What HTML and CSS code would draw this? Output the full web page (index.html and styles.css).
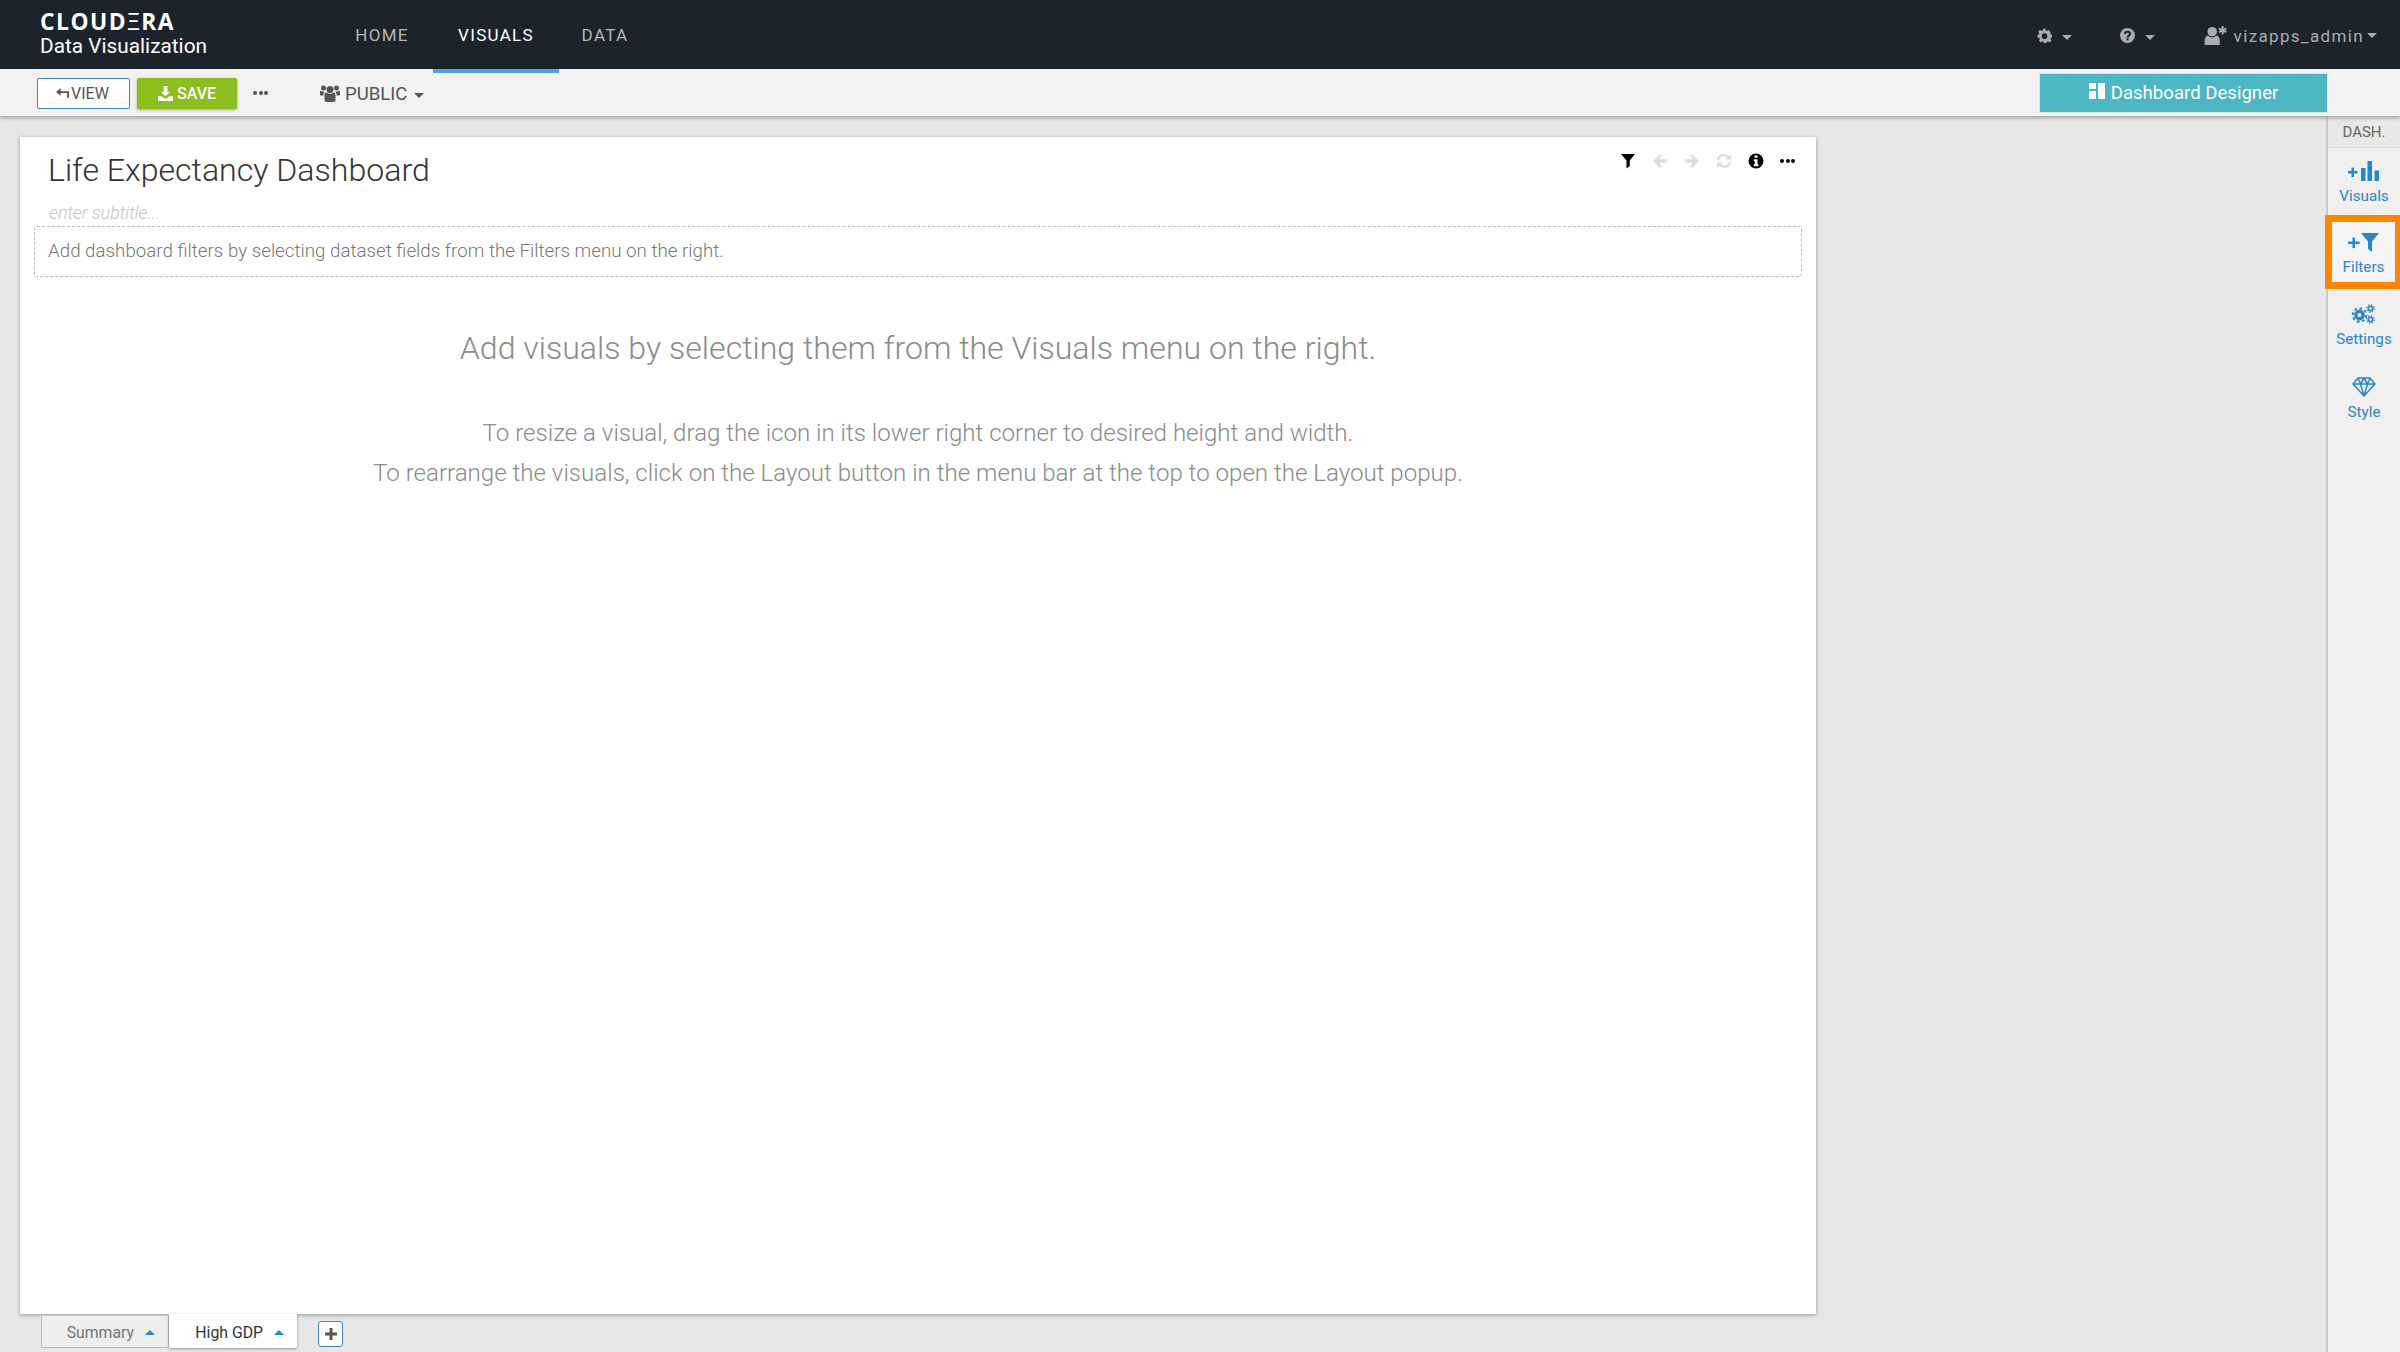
FILE: index.html
```html
<!DOCTYPE html>
<html lang="en">
<head>
<meta charset="utf-8">
<title>Life Expectancy Dashboard</title>
<link rel="stylesheet" href="styles.css">
</head>
<body>
<header class="topbar">
  <div class="brand">
    <div class="brand-name">CLOUD<span class="brand-e">Ξ</span>RA</div>
    <div class="brand-sub">Data Visualization</div>
  </div>
  <nav class="nav">
    <a class="nav-item nav-home">HOME</a>
    <a class="nav-item active">VISUALS</a>
    <a class="nav-item nav-data">DATA</a>
  </nav>
  <div class="top-right">
    <span class="top-menu gear-menu">
      <svg class="ic14" viewBox="0 0 24 24"><path fill="#a9adb1" fill-rule="evenodd" d="M14.200 1h-4.400l-.6 3.100-1.700.7-2.600-1.800-3.100 3.100 1.800 2.600-.7 1.700L.9 11v4.200l3.100.6.7 1.700-1.800 2.600 3.100 3 2.600-1.800 1.700.7.6 2.900h4.400l.6-3 1.700-.7 2.600 1.800 3-3-1.800-2.600.7-1.700 3.100-.6V11l-3.100-.6-.7-1.700L21.200 6l-3-3-2.600 1.800-1.700-.7zM12 8.500a4.500 4.500 0 1 1 0 9 4.500 4.500 0 0 1 0-9z"/></svg>
      <i class="caret caret-grey"></i>
    </span>
    <span class="top-menu help-menu">
      <svg class="ic14" viewBox="0 0 24 24"><circle cx="12" cy="12" r="12" fill="#a9adb1"/><path fill="none" stroke="#1c232b" stroke-width="3.200" d="M8 9.500C8 7 10 6 12 6s4 1.200 4 3.500c0 3-4 3-4 5.500"/><rect x="10.300" y="16.500" width="3.400" height="3.200" fill="#1c232b"/></svg>
      <i class="caret caret-grey"></i>
    </span>
    <span class="top-menu user-menu">
      <svg class="ic-user" viewBox="0 0 24 20"><circle cx="8" cy="6" r="5" fill="#a9adb1"/><path fill="#a9adb1" d="M0 20v-5c0-3 2-5 4-5 1 1.500 2.500 2 4 2s3-.5 4-2c2 0 4 2 4 5v5z"/><path stroke="#a9adb1" stroke-width="2" d="M19 0v9M15 2.500l8 4M23 2.500l-8 4"/></svg>
      <span class="user-name">vizapps_admin</span><i class="caret caret-grey caret-tight"></i>
    </span>
  </div>
</header>

<div class="toolbar">
  <button class="btn btn-view">
    <svg class="ic-reply" viewBox="0 0 14 10"><path fill="#555" d="M5 0v3h9v7h-2V5H5v3L0 4z"/></svg>VIEW
  </button>
  <button class="btn btn-save">
    <svg class="ic-save" viewBox="0 0 16 16"><path fill="#fff" d="M6 0h4v6h3l-5 5-5-5h3zM0 11h4l2 2h4l2-2h4v5H0z"/></svg>SAVE
  </button>
  <span class="dots dots-bar"><i></i><i></i><i></i></span>
  <span class="public">
    <svg class="ic-group" viewBox="0 0 20 17"><circle cx="10" cy="4.500" r="3.500" fill="#555"/><circle cx="3.500" cy="3" r="2.500" fill="#555"/><circle cx="16.500" cy="3" r="2.500" fill="#555"/><path fill="#555" d="M4.500 10c0-1.500 1-2.500 2-2.500 1 .8 2.200 1.200 3.500 1.200s2.500-.4 3.500-1.200c1 0 2 1 2 2.500v5c0 1-1 2-2 2h-7c-1 0-2-1-2-2z"/><path fill="#555" d="M0 7c0-.8.500-1.300 1-1.300.7.600 1.500.9 2.500.9l1 .4C3.800 7.800 3.400 9 3.400 10.500H1c-.5 0-1-.5-1-1zM20 7c0-.8-.5-1.300-1-1.300-.7.600-1.500.9-2.500.9l-1 .4c.7.800 1.100 2 1.100 3.500H19c.5 0 1-.5 1-1z"/></svg>
    PUBLIC<i class="caret caret-dark"></i>
  </span>
  <div class="designer">
    <svg class="ic-layout" viewBox="0 0 16 16"><path fill="#fff" d="M0 0h7v6H0zM0 8h7v8H0zM9 0h7v16H9z"/></svg>Dashboard Designer
  </div>
</div>

<div class="workspace">
  <main class="canvas">
    <section class="card">
      <div class="card-head">
        <h1 class="title">Life Expectancy Dashboard</h1>
        <div class="card-tools">
          <svg class="tool" viewBox="0 0 16 16"><path fill="#000" d="M1 1h14L9.800 7.500V13L6.500 15.500V7.500z"/></svg>
          <svg class="tool" viewBox="0 0 16 16"><path fill="#ddd" d="M8 1l2 2-3.200 3.300H15v3.400H6.800L10 13l-2 2-7-7z"/></svg>
          <svg class="tool" viewBox="0 0 16 16"><path fill="#ddd" d="M8 1L6 3l3.200 3.300H1v3.400h8.200L6 13l2 2 7-7z"/></svg>
          <svg class="tool" viewBox="0 0 16 16"><path fill="none" stroke="#ddd" stroke-width="2.200" d="M2 7c.5-3 3-4.800 6-4.800 2 0 3.500 1 4.500 2.300M14 9c-.5 3-3 4.800-6 4.800-2 0-3.500-1-4.500-2.300"/><path fill="#ddd" d="M15 1v5.500H9.500zM1 15V9.500h5.500z"/></svg>
          <svg class="tool" viewBox="0 0 16 16"><circle cx="8" cy="8" r="7.500" fill="#000"/><path fill="#fff" d="M6.500 2.500h3v2.300h-3zM5.800 6.200h3.700v5h1v2H5.800v-2h1v-3h-1z"/></svg>
          <span class="dots dots-card"><i></i><i></i><i></i></span>
        </div>
      </div>
      <div class="subtitle">enter subtitle...</div>
      <div class="filter-zone">Add dashboard filters by selecting dataset fields from the Filters menu on the right.</div>
      <div class="hint">
        <h2 class="hint-title">Add visuals by selecting them from the Visuals menu on the right.</h2>
        <p class="hint-line">To resize a visual, drag the icon in its lower right corner to desired height and width.</p>
        <p class="hint-line">To rearrange the visuals, click on the Layout button in the menu bar at the top to open the Layout popup.</p>
      </div>
    </section>
    <div class="tabs">
      <div class="tab">Summary<i class="caret-up"></i></div>
      <div class="tab tab-active">High GDP<i class="caret-up"></i></div>
      <button class="tab-add"><svg viewBox="0 0 12 12"><path fill="#555" d="M4.500 0h3v4.500H12v3H7.500V12h-3V7.500H0v-3h4.500z"/></svg></button>
    </div>
  </main>
  <aside class="side">
    <div class="side-head">DASH.</div>
    <div class="side-item">
      <svg class="side-ic" viewBox="0 0 32 20"><path fill="#2b86c8" d="M0 10h3.500V6.500h2.500V10h3.500v2.500H6V16H3.500v-3.500H0zM13 7h4.500v13H13zM19.500 0H24v20h-4.500zM26.500 9.500H31V20h-4.500z"/></svg>
      <span>Visuals</span>
    </div>
    <div class="side-item side-item-hl">
      <svg class="side-ic" viewBox="0 0 32 20"><path fill="#2b86c8" d="M0 9.500h4.500V5.500H7v4h4.500V12H7v4H4.500v-4H0zM13 1h18l-7 8.500V20l-4-3V9.500z"/></svg>
      <span>Filters</span>
    </div>
    <div class="side-item">
      <svg class="side-ic" viewBox="0 0 32 20"><g fill="none" stroke="#2b86c8"><circle cx="11.500" cy="11" r="3.700" stroke-width="3.400"/><circle cx="11.500" cy="11" r="6.800" stroke-width="2" stroke-dasharray="2.800 2.500"/><circle cx="22.500" cy="4.500" r="2.200" stroke-width="1.500"/><circle cx="22.500" cy="4.500" r="3.700" stroke-width="1.200" stroke-dasharray="1.500 1.400"/><circle cx="22.500" cy="15.500" r="2.200" stroke-width="1.500"/><circle cx="22.500" cy="15.500" r="3.700" stroke-width="1.200" stroke-dasharray="1.500 1.400"/></g></svg>
      <span>Settings</span>
    </div>
    <div class="side-item">
      <svg class="side-ic" viewBox="0 0 32 20"><path fill="none" stroke="#2b86c8" stroke-width="1.500" stroke-linejoin="round" d="M10 1h12l5 6-11 12L5 7zM5 7h22M10 1l2.500 6L16 19l3.500-12L22 1M12.500 7L16 1l3.500 6"/></svg>
      <span>Style</span>
    </div>
  </aside>
</div>
</body>
</html>
```

FILE: styles.css
```css
* { box-sizing: border-box; }
html, body { height: 100%; }
body {
  margin: 0;
  height: 1352px;
  overflow: hidden;
  display: flex;
  flex-direction: column;
  background: #e7e7e7;
  font-family: Roboto, "Liberation Sans", sans-serif;
  color: #333;
}

/* top bar */
.topbar {
  height: 69px;
  flex: none;
  display: flex;
  align-items: stretch;
  background: #1c232b;
  padding-left: 40px;
}
.brand { width: 315px; padding-top: 9px; color: #fff; }
.brand-name {
  font-family: "Open Sans", sans-serif;
  font-size: 22.800px;
  line-height: 25px;
  font-weight: 700;
  letter-spacing: 1.500px;
}
.brand-e { font-weight: 400; }
.brand-sub { font-size: 20.800px; line-height: 24px; }
.nav { display: flex; margin-left: -25px; }
.nav-item {
  display: flex;
  align-items: center;
  justify-content: center;
  height: 73px;
  font-size: 17px;
  letter-spacing: 1.300px;
  color: #b4b7ba;
  border-bottom: 4px solid transparent;
  position: relative;
  z-index: 2;
}
.nav-home { width: 104px; }
.nav-data { width: 94px; }
.nav-item.active { width: 126px; color: #fff; border-bottom-color: #4aa3e6; margin: 0 -1px; }
.top-right {
  margin-left: auto;
  display: flex;
  align-items: center;
  color: #a9adb1;
  font-size: 17px;
  padding-top: 2px;
}
.top-menu { display: flex; align-items: center; }
.ic14 { width: 15px; height: 15px; }
.gear-menu { margin-right: 48px; }
.help-menu { margin-right: 49px; }
.user-menu { margin-right: 23px; }
.ic-user { width: 24px; height: 19px; margin-right: 6px; }
.user-name { letter-spacing: 1.350px; }
.caret { display: inline-block; width: 0; height: 0; border-left: 5px solid transparent; border-right: 5px solid transparent; }
.caret-grey { border-top: 5px solid #a9adb1; margin-left: 10px; margin-top: 3px; }
.caret-tight { margin-left: 3px; margin-top: 0; }
.caret-dark { border-top: 5px solid #555; margin-left: 7px; margin-top: 3px; }

/* toolbar */
.toolbar {
  height: 47px;
  flex: none;
  display: flex;
  align-items: center;
  background: #f2f2f2;
  padding: 1px 72px 0 37px;
  box-shadow: 0 2px 4px rgba(0,0,0,.3);
  position: relative;
  z-index: 1;
}
.btn {
  display: flex;
  align-items: center;
  justify-content: center;
  height: 31px;
  border-radius: 2px;
  font-family: inherit;
  font-size: 16px;
  padding: 0;
}
.btn-view { width: 93px; background: #fff; border: 1px solid #3b8ac4; color: #555; margin-right: 7px; }
.btn-save { width: 100px; background: #8cbe1f; border: none; color: #fff; font-weight: 500; box-shadow: 0 1px 3px rgba(0,0,0,.35); }
.ic-reply { width: 13px; height: 10px; margin-right: 2px; margin-left: -2px; }
.ic-save { width: 15px; height: 15px; margin-right: 4px; }
.dots { display: inline-flex; gap: 1.500px; }
.dots i { width: 4px; height: 4px; border-radius: 50%; }
.dots-bar { margin-left: 16px; }
.dots-bar i { background: #555; }
.dots-card i { background: #000; }
.public { display: flex; align-items: center; margin-left: 52px; padding-top: 1px; font-size: 18.500px; color: #555; }
.ic-group { width: 20px; height: 17px; margin-right: 5px; }
.designer {
  margin-left: auto;
  width: 289px;
  height: 40px;
  margin-top: -1px;
  display: flex;
  align-items: center;
  justify-content: center;
  background: #4db6c3;
  border: 1px solid #cdebee;
  color: #fff;
  font-size: 18.600px;
}
.ic-layout { width: 16px; height: 16px; margin-right: 6px; margin-top: -3px; }

/* workspace */
.workspace { flex: 1; display: flex; min-height: 0; }
.canvas { flex: 1; padding: 21px 0 0 20px; display: flex; flex-direction: column; min-width: 0; }
.card {
  width: 1796px;
  height: 1177px;
  background: #fff;
  box-shadow: 0 1px 4px rgba(0,0,0,.35);
  padding: 0 14px;
}
.card-head { display: flex; justify-content: space-between; height: 62px; }
.title { margin: 13px 0 0 14px; font-size: 32.100px; line-height: 40px; font-weight: 300; color: #333; }
.card-tools { display: flex; align-items: center; gap: 16px; height: 34px; margin: 7px 7px 0 0; }
.tool { width: 16px; height: 16px; }
.subtitle { margin: 2px 0 1px 15px; height: 24px; font-size: 17.800px; line-height: 24px; font-style: italic; font-weight: 300; color: #c4c4c4; }
.filter-zone {
  height: 51px;
  display: flex;
  align-items: center;
  padding: 0 0 1px 13px;
  border: 1px dashed #bbb;
  border-radius: 3px;
  font-size: 18.750px;
  font-weight: 300;
  color: #777;
}
.hint { text-align: center; color: #8b8b8b; font-weight: 300; }
.hint-title { margin: 49px 0 0; font-size: 32.100px; line-height: 44px; font-weight: 300; }
.hint-line { margin: 0; font-size: 24.100px; line-height: 40px; }
.hint-title + .hint-line { margin-top: 43px; }

/* tabs */
.tabs { display: flex; align-items: flex-start; padding-left: 21px; }
.tab {
  width: 128px;
  height: 32px;
  margin-top: 2px;
  display: flex;
  align-items: center;
  justify-content: flex-end;
  padding: 1px 13px 0 0;
  background: #eee;
  border: 1px solid #bbb;
  border-top: none;
  border-radius: 0 0 2px 2px;
  font-size: 15.800px;
  color: #777;
}
.tab-active {
  height: 34px;
  margin-top: 0;
  padding-top: 2px;
  background: #fff;
  border: none;
  color: #333;
  box-shadow: 0 1px 3px rgba(0,0,0,.35);
}
.caret-up {
  width: 0; height: 0;
  margin-left: 11px;
  border-left: 5px solid transparent;
  border-right: 5px solid transparent;
  border-bottom: 5px solid #2b86c8;
}
.tab-add {
  width: 25px;
  height: 26px;
  margin: 7px 0 0 21px;
  padding: 0;
  display: flex;
  align-items: center;
  justify-content: center;
  background: #fff;
  border: 1px solid #3b8ac4;
  border-radius: 3px;
}
.tab-add svg { width: 12px; height: 12px; }

/* right rail */
.side {
  width: 74px;
  flex: none;
  background: #f0f0f0;
  border-left: 2px solid #ccc;
}
.side-head {
  height: 32px;
  display: flex;
  align-items: center;
  justify-content: center;
  background: #e8e8e8;
  border-bottom: 1px solid #ddd;
  font-size: 15px;
  color: #666;
}
.side-item {
  height: 73px;
  display: flex;
  flex-direction: column;
  align-items: center;
  padding-top: 15px;
  font-size: 15.200px;
  line-height: 18px;
  color: #2b86c8;
}
.side-item:nth-child(2) { height: 67px; padding-top: 13px; }
.side-ic { width: 32px; height: 20px; margin-bottom: 6px; }
.side-item-hl {
  height: 74px;
  margin-left: -3px;
  padding-top: 10px;
  border: solid #ff8400;
  border-width: 7px 5px 7px 7px;
  background: #f4f4f4;
}
```
